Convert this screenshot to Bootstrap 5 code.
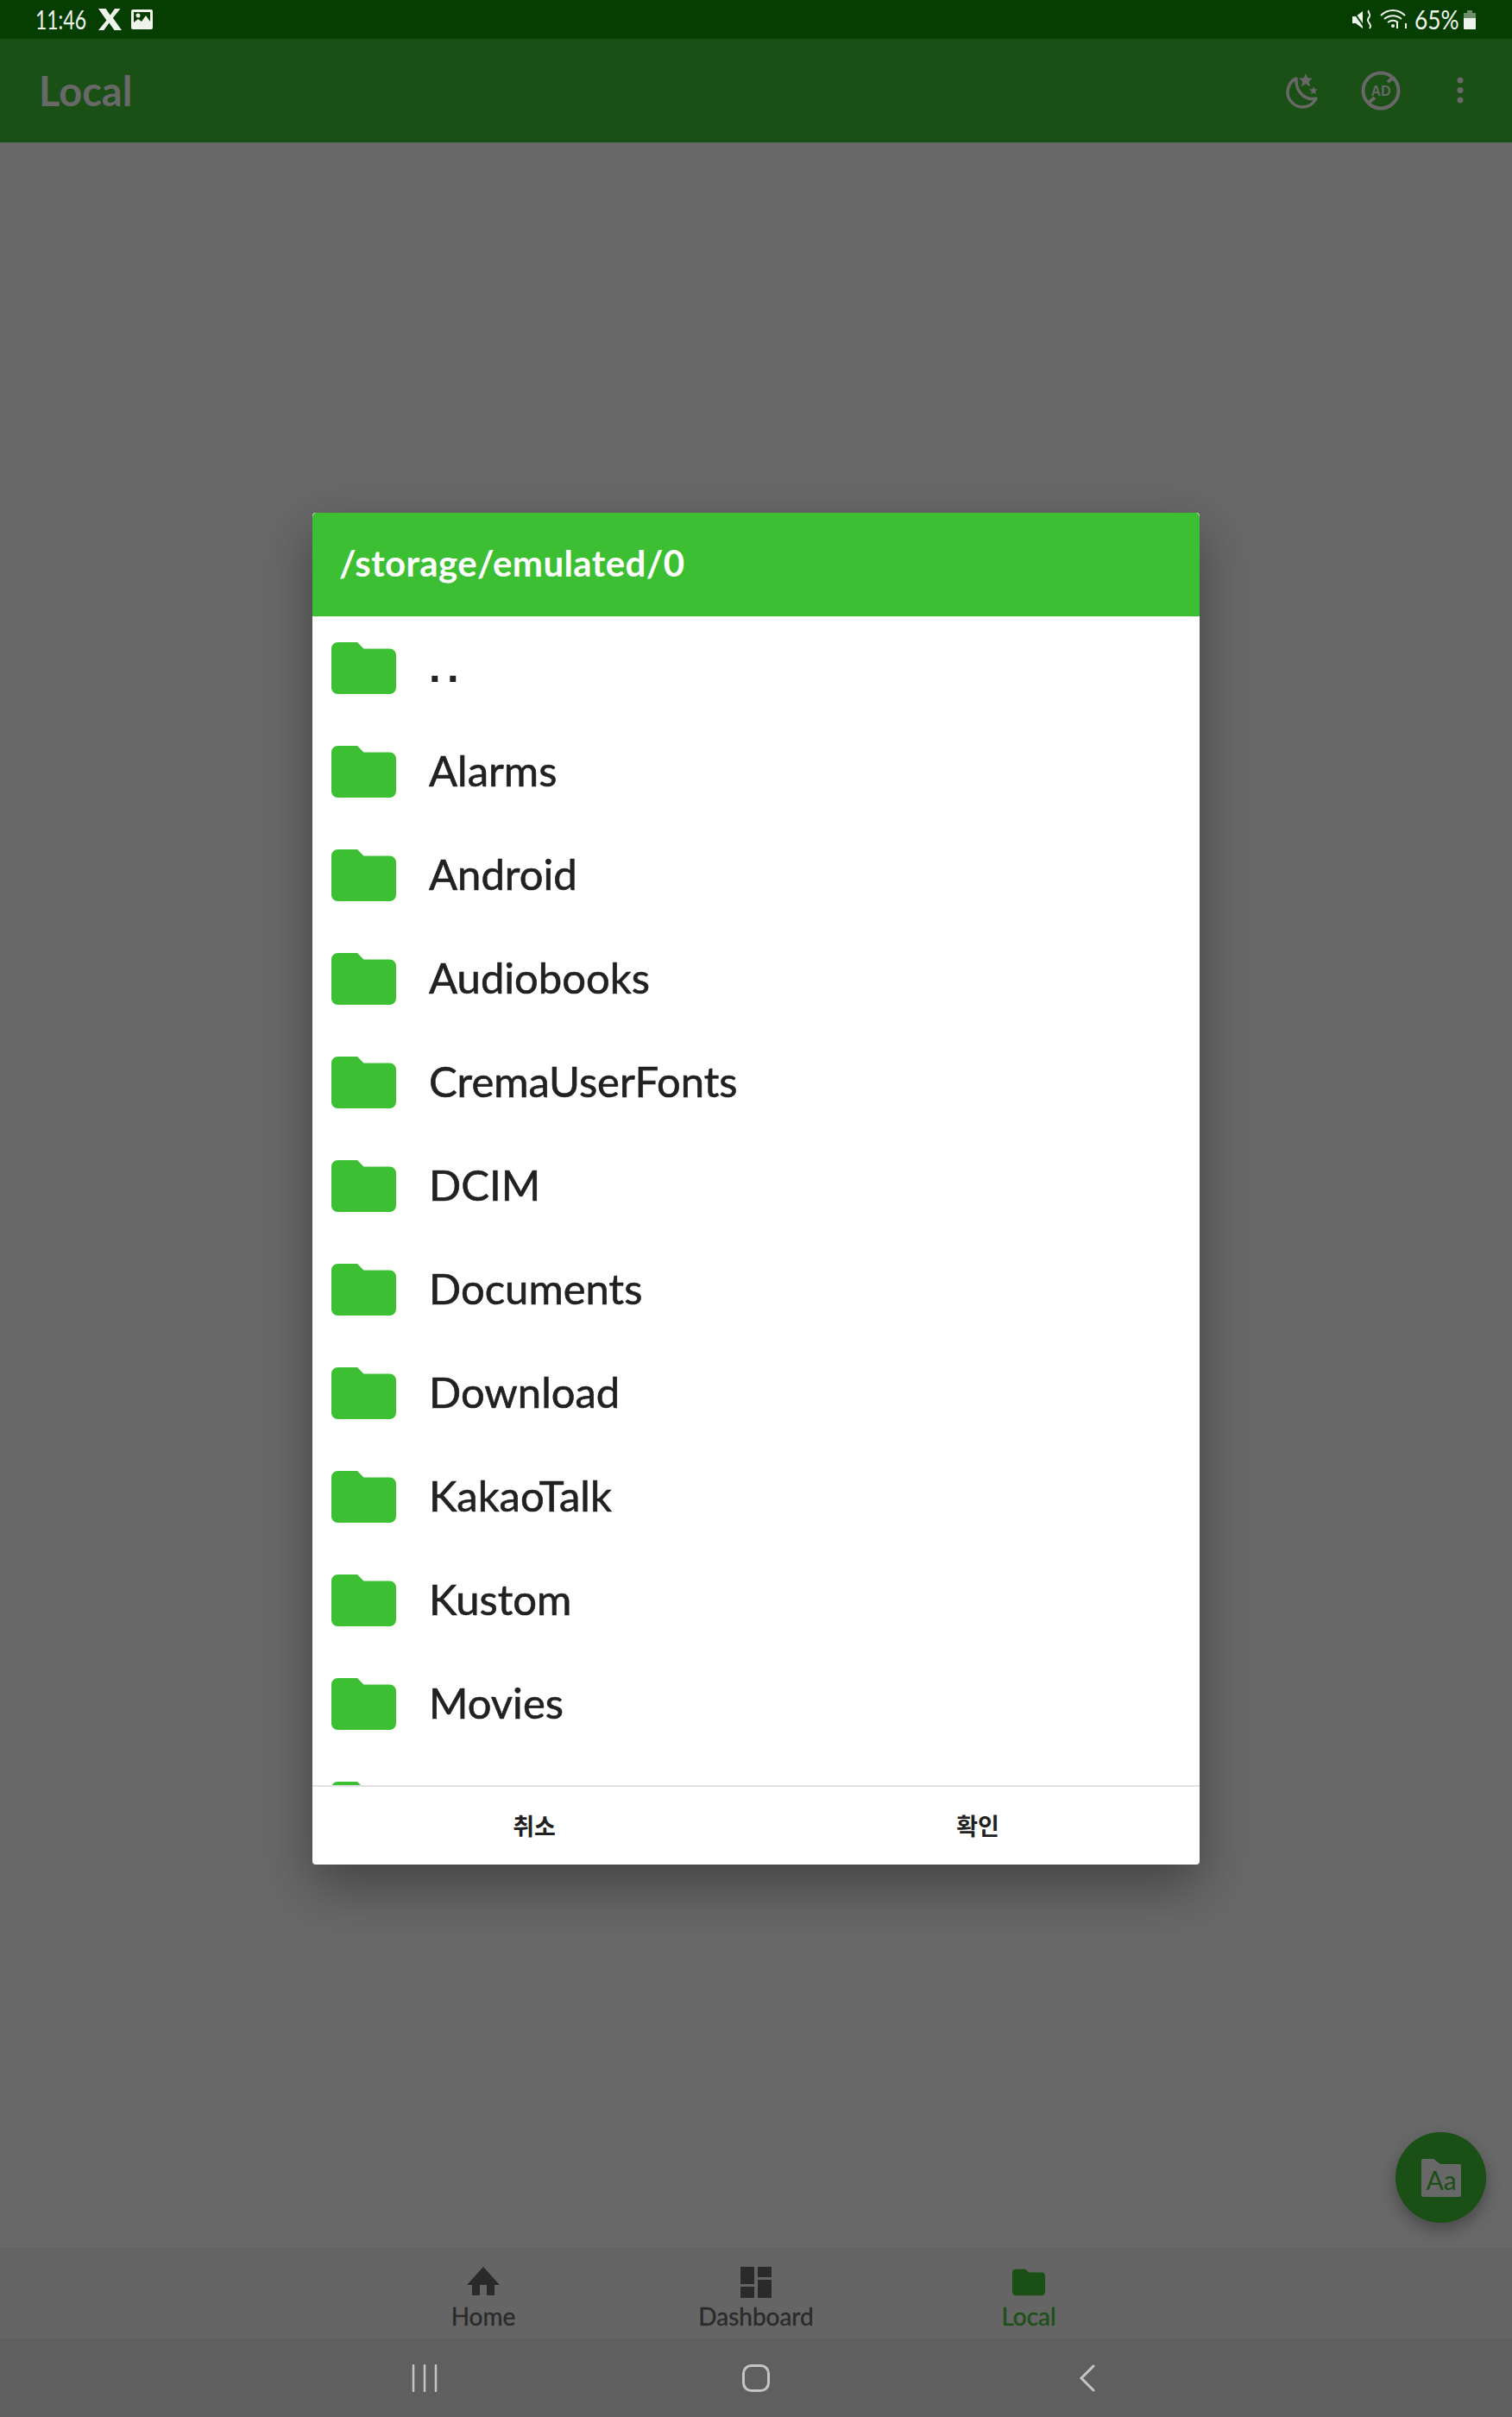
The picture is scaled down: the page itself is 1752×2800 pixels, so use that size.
<!DOCTYPE html>
<html lang="en">
<head>
<meta charset="UTF-8">
<title>Local</title>
<meta name="viewport" content="width=device-width, initial-scale=1">
<link href="https://cdn.jsdelivr.net/npm/bootstrap@5.3.0/dist/css/bootstrap.min.css" rel="stylesheet">
<style>
    html, body { height: 2800px; }
    body {
        background-color: #686868;
        font-family: "Lato", "Noto Sans CJK KR", sans-serif;
    }
    .screen { height: 2800px; position: relative; overflow: hidden; }
    .status-bar { height: 45px; background-color: #063d00; color: #eef3ec; padding: 0 41px; font-size: 31px; line-height: 1; }
    .status-bar svg { display: block; fill: #eef3ec; }
    /* the phone's clock font is much narrower than anything installed */
    .narrow-text { display: inline-block; white-space: nowrap; transform-origin: left center; }
    .clock-text { width: 58px; transform: scaleX(.74); }
    .battery-text { width: 52px; transform: scaleX(.85); }
    .app-bar { height: 120px; background-color: #1a4f16; color: #686868; padding: 0 45px; }
    .app-title { font-size: 47px; font-weight: 700; margin: 0; line-height: 1; }
    .bottom-tabs { height: 106px; background-color: #656565; border-top: 1px solid #616161; }
    .tab-item { width: 316px; color: #2a2a2a; font-size: 28px; line-height: 1; padding-top: 21px; -webkit-text-stroke: .4px; }
    .tab-item svg { display: block; height: 36px; margin-bottom: 7px; fill: #2a2a2a; }
    .tab-active { color: #1a4f16; }
    .tab-active svg { fill: #1a4f16; }
    .system-bar { height: 90px; background-color: #5f5f5f; }
    .system-slot { width: 384px; }
    .dialog-layer { position: absolute; top: 45px; left: 0; right: 0; bottom: 91px; }
    .card.folder-dialog { width: 1028px; height: 1566px; border: 0; border-radius: 4px; overflow: hidden; box-shadow: 0 24px 60px rgba(0,0,0,.36); }
    .dialog-head { height: 120px; flex: none; background-color: #3dbf33; color: #fff; font-size: 42px; font-weight: 700; padding: 0 31px 3px; border: 0; border-radius: 0; letter-spacing: .4px; }
    .folder-list { overflow: hidden; }
    .folder-row { height: 120px; flex: none; padding: 0 22px; gap: 38px; color: #212121; font-size: 49px; border: 0; -webkit-text-stroke: .6px; }
    .folder-name { margin-bottom: 3px; }
    .folder-up { font-family: "Liberation Sans", sans-serif; font-weight: 700; letter-spacing: 7.5px; margin-bottom: 0; -webkit-text-stroke: 0; }
    .card.folder-dialog > .list-group + .dialog-foot { height: 92px; flex: none; border-top: 2px solid #e2e2e2; background-color: #fff; padding: 0; font-family: "Noto Sans CJK KR", sans-serif; font-size: 27px; font-weight: 700; color: #212121; }
    .fab-btn { position: absolute; left: 1617px; top: 2470px; width: 105px; height: 105px; background-color: #1a4f16; box-shadow: 0 8px 18px rgba(0,0,0,.3); }
</style>
</head>
<body>
<div class="screen d-flex flex-column">

    <div class="status-bar d-flex align-items-center justify-content-between">
        <div class="d-flex align-items-center">
            <span class="narrow-text clock-text">11:46</span>
            <svg style="margin-left:15px" width="27" height="25" viewBox="0 0 27 25"><path d="M0 0h8.500l5.200 7.400L19 0h6.500l-8.600 10.700L27 25h-8.500l-6-8.500L6.300 25H0l9.400-11.400z"/></svg>
            <svg style="margin-left:11px" width="25" height="23" viewBox="0 0 25 23"><path fill-rule="evenodd" d="M2 0h21a2 2 0 0 1 2 2v19a2 2 0 0 1-2 2H2a2 2 0 0 1-2-2V2a2 2 0 0 1 2-2zm1 3v12l5-4 4 3 5-7 5 7V3zm5 1.500a2.500 2.500 0 1 1 0 5 2.500 2.500 0 0 1 0-5z"/></svg>
        </div>
        <div class="d-flex align-items-center">
            <svg width="24" height="24" viewBox="0 0 24 24"><path d="M0 8h4l8-6v20l-8-6H0z"/><path d="M1 2l14 20" stroke="#063d00" stroke-width="2"/><path d="M19 1c-2 3 3 4 1 7s-3 4-1 7 3 4 1 7" fill="none" stroke="#eef3ec" stroke-width="2"/></svg>
            <svg class="ms-2" width="32" height="24" viewBox="0 0 32 24" fill="none"><g stroke="#eef3ec" stroke-width="2" fill="none"><path d="M1 7c8-8 20-8 28 0"/><path d="M5 11c6-5 14-5 20 0"/><path d="M9 15c4-3 8-3 12 0"/><path d="M20 15v7M30 16v6"/></g><circle cx="15" cy="19" r="2"/></svg>
            <span class="narrow-text battery-text ms-2">65%</span>
            <svg class="ms-1" width="16" height="24" viewBox="0 0 16 24"><path d="M5 1h6v3h4v6H1V4h4z" opacity=".45"/><path d="M1 10h14v12a1 1 0 0 1-1 1H2a1 1 0 0 1-1-1z"/></svg>
        </div>
    </div>

    <div class="app-bar d-flex align-items-center justify-content-between">
        <h1 class="app-title">Local</h1>
        <div class="d-flex align-items-center">
            <svg width="40" height="44" viewBox="0 0 40 44"><path d="M13 8C5 11 3 20 3 24c0 9 8 17 17 17 7 0 13-4 16-10-12 3-24-7-23-23z" fill="none" stroke="#686868" stroke-width="3.500" stroke-linejoin="round"/><path d="M24 2l2.300 5.300 5.700.5-4.300 3.800 1.300 5.600-5-3-5 3 1.300-5.600-4.300-3.800 5.700-.5zM33 17l1.400 3.200 3.400.3-2.600 2.300.8 3.400-3-1.800-3 1.800.8-3.400-2.600-2.300 3.400-.3z" fill="#686868"/></svg>
            <svg class="ms-5" width="46" height="46" viewBox="0 0 46 46"><circle cx="23" cy="23" r="20.500" fill="none" stroke="#686868" stroke-width="4"/><path d="M9 37l7-6M31 13l6-5" stroke="#686868" stroke-width="4"/><text x="23" y="29" text-anchor="middle" font-family="Liberation Sans" font-weight="700" font-size="16" fill="#686868">AD</text></svg>
            <svg width="8" height="32" viewBox="0 0 8 32" style="margin-left:65px;margin-right:11px"><circle cx="4" cy="4" r="3.500" fill="#686868"/><circle cx="4" cy="15.500" r="3.500" fill="#686868"/><circle cx="4" cy="27" r="3.500" fill="#686868"/></svg>
        </div>
    </div>

    <div class="flex-grow-1"></div>

    <div class="bottom-tabs d-flex justify-content-center">
        <div class="tab-item d-flex flex-column align-items-center">
            <svg width="38" height="36" viewBox="0 0 38 36"><path d="M19 0l19 21h-6v12h-9V21h-8v12H6V21H0z"/></svg>
            <span>Home</span>
        </div>
        <div class="tab-item d-flex flex-column align-items-center">
            <svg width="36" height="36" viewBox="0 0 36 36"><path d="M0 0h16v20H0zM20 0h16v12H20zM0 23h16v13H0zM20 15h16v21H20z"/></svg>
            <span>Dashboard</span>
        </div>
        <div class="tab-item tab-active d-flex flex-column align-items-center">
            <svg width="38" height="36" viewBox="2 3.500 20 17"><path d="M10 4H4c-1.100 0-2 .9-2 2v12c0 1.100.9 2 2 2h16c1.100 0 2-.9 2-2V8c0-1.100-.9-2-2-2h-8l-2-2z"/></svg>
            <span>Local</span>
        </div>
    </div>

    <div class="system-bar d-flex align-items-center justify-content-center">
        <div class="system-slot d-flex justify-content-center">
            <svg width="30" height="32" viewBox="0 0 30 32"><path d="M2 1v30M15 1v30M28 1v30" stroke="#c4c4c4" stroke-width="2.500" stroke-linecap="round"/></svg>
        </div>
        <div class="system-slot d-flex justify-content-center">
            <svg width="32" height="32" viewBox="0 0 32 32"><rect x="1.500" y="1.500" width="29" height="29" rx="9" fill="none" stroke="#c4c4c4" stroke-width="3"/></svg>
        </div>
        <div class="system-slot d-flex justify-content-center">
            <svg width="20" height="32" viewBox="0 0 20 32"><path d="M17 2L3 16l14 14" fill="none" stroke="#c4c4c4" stroke-width="3" stroke-linecap="round"/></svg>
        </div>
    </div>

    <div class="dialog-layer d-flex align-items-center justify-content-center">
        <div class="card folder-dialog">
            <div class="card-header dialog-head d-flex align-items-center">/storage/emulated/0</div>
            <div class="folder-list list-group list-group-flush flex-grow-1" id="folderList"></div>
            <div class="card-footer dialog-foot d-flex">
                <div class="w-50 d-flex align-items-center justify-content-center">취소</div>
                <div class="w-50 d-flex align-items-center justify-content-center">확인</div>
            </div>
        </div>
    </div>

    <div class="fab-btn rounded-circle d-flex align-items-center justify-content-center">
        <svg width="46" height="44" viewBox="0 0 46 44"><path d="M0 2a2 2 0 0 1 2-2h12l8 6h22a2 2 0 0 1 2 2v34a2 2 0 0 1-2 2H2a2 2 0 0 1-2-2z" fill="#686868"/><text x="23" y="36" text-anchor="middle" font-family="Lato" font-size="30" fill="#1a4f16">Aa</text></svg>
    </div>
</div>

<script>
    // last entry is only the top of a folder, the list clips it before its label shows
    const folders = ['..', 'Alarms', 'Android', 'Audiobooks', 'CremaUserFonts', 'DCIM', 'Documents', 'Download', 'KakaoTalk', 'Kustom', 'Movies', ''];
    const list = document.getElementById('folderList');
    folders.forEach((name) => {
        const row = document.createElement('div');
        row.className = 'list-group-item folder-row d-flex align-items-center';
        const nameClass = name === '..' ? 'folder-name folder-up' : 'folder-name';
        row.innerHTML = '<svg width="75" height="60" viewBox="2 4 20 16" fill="#3dbf33"><path d="M10 4H4c-1.100 0-2 .9-2 2v12c0 1.100.9 2 2 2h16c1.100 0 2-.9 2-2V8c0-1.100-.9-2-2-2h-8l-2-2z"/></svg><span class="' + nameClass + '">' + name + '</span>';
        list.appendChild(row);
    });
</script>
<script src="https://cdn.jsdelivr.net/npm/bootstrap@5.3.0/dist/js/bootstrap.bundle.min.js"></script>
</body>
</html>
